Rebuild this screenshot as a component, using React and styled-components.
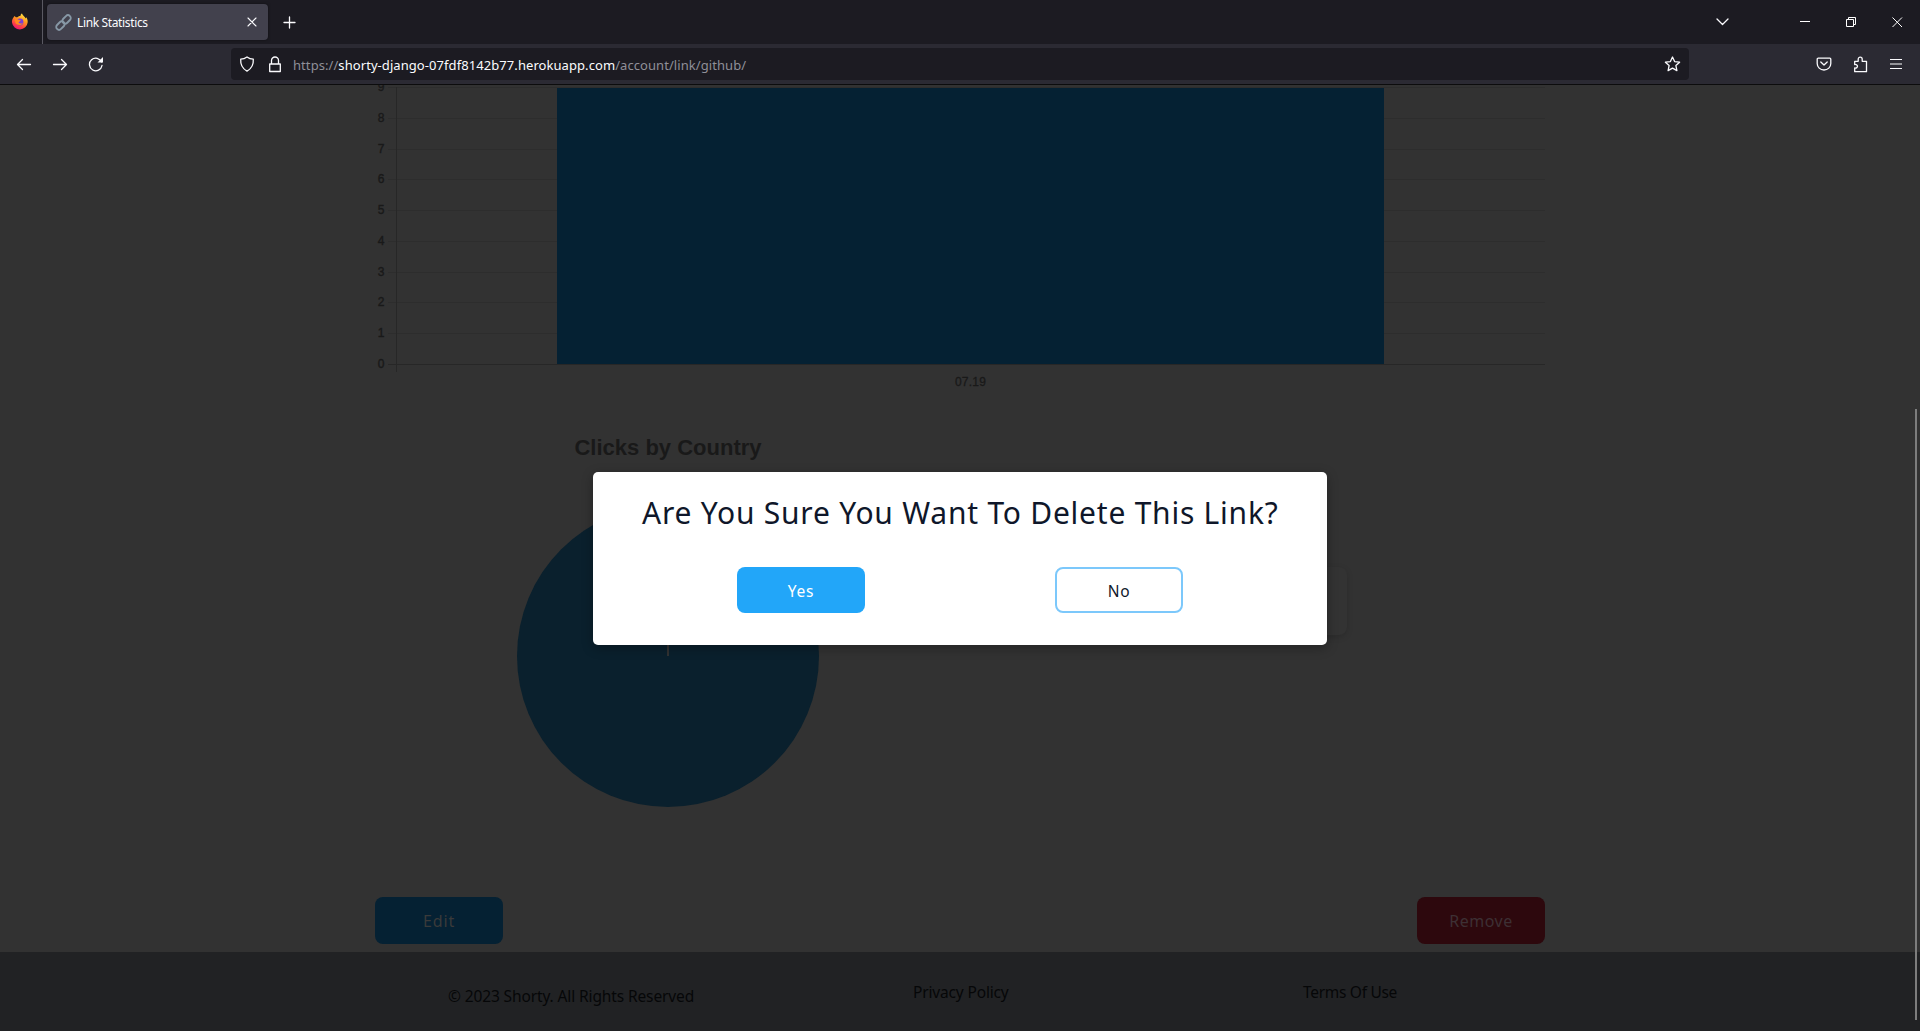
import React from "react";
import styled, { createGlobalStyle } from "styled-components";

const Global = createGlobalStyle`
  *{box-sizing:border-box}
  html,body{margin:0;background:#323232}
  body{font-family:"Noto Sans","Open Sans",sans-serif;overflow:hidden}
`;
const Window = styled.div`
  width:1920px;height:1031px;display:flex;flex-direction:column;overflow:hidden;
`;
const TabBar = styled.div`
  height:44px;flex:none;background:#1c1b22;display:flex;align-items:stretch;
`;
const Pinned = styled.div`
  width:43px;border-right:1px solid #5a5962;display:flex;align-items:center;padding-left:11px;
`;
const Tab = styled.div`
  width:221px;margin:4px 0 4px 4px;border-radius:4px;background:#42414d;display:flex;align-items:center;
  padding:0 11px 0 8px;box-shadow:0 0 3px rgba(0,0,0,.5);
`;
const TabTitle = styled.span`
  flex:1;margin-left:5px;padding-top:2px;color:#fbfbfe;font-size:12px;letter-spacing:${p => p.$ls}px;line-height:20px;white-space:nowrap;
`;
const Glyph = styled.svg`
  display:block;flex:none;margin-left:${p => p.$ml || 0}px;
`;
const WindowButtons = styled.div`
  margin-left:auto;display:flex;align-items:center;padding-right:17px;
`;
const Toolbar = styled.div`
  height:41px;flex:none;background:#2b2a33;border-bottom:1px solid #0c0c0d;display:flex;align-items:center;
`;
const NavButtons = styled.div`
  width:231px;display:flex;align-items:center;padding-left:16px;
`;
const UrlBar = styled.div`
  width:1458px;height:32px;border-radius:4px;background:#1c1b22;display:flex;align-items:center;padding:0 8px 0 8px;
`;
const Url = styled.div`
  flex:1;margin-left:11px;padding-top:2px;font-size:13px;line-height:20px;color:#8f8f98;white-space:nowrap;letter-spacing:${p => p.$ls}px;
  b{font-weight:400;color:#fbfbfe}
`;
const Extras = styled.div`
  margin-left:auto;display:flex;align-items:center;padding-right:18px;
`;
const Page = styled.main`
  flex:1;position:relative;background:#323232;overflow:hidden;display:flex;flex-direction:column;
`;
const Content = styled.div`
  width:1170px;height:867px;margin:0 auto;display:flex;flex-direction:column;
`;
const Chart = styled.svg`
  display:block;flex:none;font-family:"Liberation Sans",Arial,sans-serif;
`;
const PieRow = styled.section`
  display:flex;align-items:flex-start;height:430px;margin-top:26px;padding-left:142px;
`;
const PieBlock = styled.div`
  width:302px;display:flex;flex-direction:column;align-items:center;
`;
const PieTitle = styled.h2`
  margin:8px 0 43px;height:28px;color:#191919;white-space:nowrap;
  font:bold 22px/28px "Liberation Sans",Arial,sans-serif;
`;
const LegendCard = styled.div`
  width:300px;height:68px;margin:141px 0 0 228px;border-radius:8px;background:#333;box-shadow:0 2px 6px rgba(0,0,0,.15);
`;
const Actions = styled.div`
  display:flex;justify-content:space-between;margin-top:auto;padding-bottom:8px;
`;
const Button = styled.button`
  width:128px;height:${p => p.$h || 46}px;padding:${p => p.$pt || 0}px 0 0;border-radius:8px;border:${p => p.$border || "0"};
  background:${p => p.$bg};color:${p => p.$fg};font:400 ${p => p.$size || 16}px/22px "Noto Sans","Open Sans",sans-serif;
  letter-spacing:${p => p.$ls}px;text-align:center;
`;
const Footer = styled.footer`
  flex:1;background:#212224;display:flex;align-items:flex-start;
`;
const FooterText = styled.span`
  font-size:15.5px;line-height:22px;color:#060708;white-space:nowrap;
  margin-left:${p => p.$ml}px;margin-top:${p => p.$mt}px;width:${p => p.$w}px;letter-spacing:${p => p.$ls}px;
`;
const Overlay = styled.div`
  position:absolute;inset:0;display:flex;justify-content:center;align-items:flex-start;padding-top:387px;
`;
const Dialog = styled.div`
  width:734px;height:173px;border-radius:5px;background:#fff;box-shadow:0 3px 12px rgba(0,0,0,.3);
  display:flex;flex-direction:column;
`;
const DialogTitle = styled.h1`
  margin:19px 0 0;padding-left:49px;font-size:30px;line-height:44px;font-weight:400;color:#0f172a;white-space:nowrap;
  letter-spacing:${p => p.$ls}px;
`;
const DialogActions = styled.div`
  display:flex;margin-top:32px;padding-left:144px;gap:190px;
`;
const ScrollThumb = styled.div`
  position:absolute;left:1915px;top:324px;width:2px;height:611px;background:#7d7d7d;
`;

const line = { fill: "none", stroke: "#fbfbfe", strokeWidth: 1.3, strokeLinecap: "round", strokeLinejoin: "round" };

const Firefox = () => (
  <Glyph width="18" height="18" viewBox="0 0 18 18">
    <defs>
      <linearGradient id="fx" x1="0.8" y1="0" x2="0.3" y2="1">
        <stop offset="0" stopColor="#fff44f" /><stop offset=".4" stopColor="#ff9a1f" />
        <stop offset=".75" stopColor="#ff3f45" /><stop offset="1" stopColor="#e8127c" />
      </linearGradient>
    </defs>
    <path d="M2.6 4.2 3.5 2.9l1.4 1.3 1.4.1C7.600 3.200 8.800 2.700 9.500 3 9.400 1.500 10.200.8 11 .4c.4 1.900 3 2.900 3.800 5.100l.5-1.200c1.100 1.700 1.500 3.300 1.400 5A7.900 7.900 0 0 1 1 9.600C.8 7.600 1.400 5.600 2.600 4.200z" fill="url(#fx)" />
    <circle cx="9" cy="9" r="3.400" fill="#7a3fd8" />
    <path d="M3.500 6.500c1.500-.9 3.400-.6 4.500.6l1.800.2c-.4 1.200-1.700 1.300-2.300 2 .7 1.500 2.700 1.700 4.300.6-.8 2.500-5.400 3.200-7.300.2z" fill="#ff8a1f" />
  </Glyph>
);
const LinkIcon = () => (
  <Glyph width="17" height="17" viewBox="0 0 17 17">
    <g fill="none" stroke="#8798a6" strokeWidth="1.900">
      <rect x="-4.700" y="-2.800" width="9.400" height="5.600" rx="2.800" transform="translate(11.600 5.400) rotate(-45)" />
      <rect x="-4.700" y="-2.800" width="9.400" height="5.600" rx="2.800" transform="translate(5.400 11.600) rotate(-45)" />
    </g>
  </Glyph>
);

const ticks = [9, 8, 7, 6, 5, 4, 3, 2, 1, 0];
const tickY = v => 2.500 + Math.round((9 - v) * 30.75);

const BarChart = () => (
  <Chart width="1170" height="315">
    {ticks.map(v => (
      <g key={v}>
        <path d={`M13 ${tickY(v)}H1170`} stroke={v === 0 ? "#272727" : "#2d2d2d"} />
        <text x="9.500" y={tickY(v) + 3.500} textAnchor="end" fontSize="12" stroke="#191919" strokeWidth=".4" fill="#191919">{v}</text>
      </g>
    ))}
    <path d="M21.500 2V287" stroke="#272727" />
    <rect x="182" y="3" width="827" height="276" fill="#052133" />
    <text x="595.500" y="301" textAnchor="middle" fontSize="12" letterSpacing=".2" stroke="#191919" strokeWidth=".3" fill="#191919">07.19</text>
  </Chart>
);

export default function App() {
  return (
    <Window>
      <Global />
      <TabBar>
        <Pinned><Firefox /></Pinned>
        <Tab>
          <LinkIcon />
          <TabTitle $ls={-0.36}>Link Statistics</TabTitle>
          <Glyph width="10" height="10" viewBox="0 0 10 10"><path d="M1 1l8 8M9 1l-8 8" {...line} strokeWidth="1.100" /></Glyph>
        </Tab>
        <Glyph $ml={15} width="13" height="44" viewBox="0 0 13 44"><path d="M6.500 17v11M1 22.500h11" {...line} /></Glyph>
        <WindowButtons>
          <Glyph width="13" height="8" viewBox="0 0 13 8"><path d="M1 1l5.500 5.500L12 1" {...line} /></Glyph>
          <Glyph $ml={71} width="11" height="12" viewBox="0 -1 11 12"><path d="M0 4.500h10" stroke="#fff" /></Glyph>
          <Glyph $ml={35} width="11" height="12" viewBox="0 -1 11 12"><path d="M.5 2.500h7v7h-7zM2.500 2.500V.5h7v7H7.500" fill="none" stroke="#fff" /></Glyph>
          <Glyph $ml={35} width="11" height="12" viewBox="0 -1 11 12"><path d="M.5.5l9.500 9.500M10 .5L.5 10" stroke="#fff" /></Glyph>
        </WindowButtons>
      </TabBar>
      <Toolbar>
        <NavButtons>
          <Glyph width="16" height="14" viewBox="0 0 16 14"><path d="M14.500 7.500H1.500M6.500 2.500l-5 5 5 5" {...line} /></Glyph>
          <Glyph $ml={20} width="16" height="14" viewBox="0 0 16 14"><path d="M1.500 7.500h13M9.500 2.500l5 5-5 5" {...line} /></Glyph>
          <Glyph $ml={20} width="16" height="16" viewBox="0 0 16 16"><path d="M13.600 6A6.300 6.300 0 1 0 14 9.500" {...line} /><path d="M15 1v5.500H9.500z" fill="#fbfbfe" /></Glyph>
        </NavButtons>
        <UrlBar>
          <Glyph width="16" height="16" viewBox="0 0 16 16"><path d="M8 .9c2 1.500 4 2.100 6.300 2.200C14.700 9 12.400 12.700 8 15.100 3.600 12.700 1.300 9 1.700 3.100 4 3 6 2.400 8 .9z" {...line} /></Glyph>
          <Glyph $ml={13} width="14" height="17" viewBox="0 0 14 17"><path d="M1.700 8h10.600v7.500H1.700zM3.500 8V4.500a3.500 3.500 0 0 1 7 0V8" {...line} /></Glyph>
          <Url $ls={0.07}>https://<b>shorty-django-07fdf8142b77.herokuapp.com</b>/account/link/github/</Url>
          <Glyph width="17" height="16" viewBox="0 0 17 16"><path d="M8.500 1l2.100 4.600 5 .6-3.700 3.400 1 5-4.400-2.500-4.400 2.500 1-5L1.400 6.200l5-.6z" {...line} /></Glyph>
        </UrlBar>
        <Extras>
          <Glyph width="16" height="14" viewBox="0 0 16 14"><path d="M2.200 1.200h11.600c.6 0 1 .4 1 1v4.300c0 3.700-3 6.500-6.800 6.500S1.200 10.200 1.200 6.500V2.200c0-.6.4-1 1-1zM4.800 5L8 8l3.200-3" {...line} /></Glyph>
          <Glyph $ml={21} width="15" height="17" viewBox="0 0 15 17"><path d="M1.700 15.700V12c3.700.6 3.700-4 0-3.500V5.300h3.500V3.200c0-2.800 4-2.800 4 0v2.100h4.300v10.400z" {...line} /></Glyph>
          <Glyph $ml={21} width="13" height="12" viewBox="0 0 13 12"><path d="M1 1.500h12M1 6h12M1 10.500h12" stroke="#fbfbfe" strokeWidth="1.100" /></Glyph>
        </Extras>
      </Toolbar>
      <Page>
        <Content>
          <BarChart />
          <PieRow>
            <PieBlock>
              <PieTitle>Clicks by Country</PieTitle>
              <Glyph width="302" height="302"><circle cx="151" cy="151" r="151" fill="#0a202d" /><path d="M151 0v151" stroke="#323232" strokeWidth="2" /></Glyph>
            </PieBlock>
            <LegendCard />
          </PieRow>
          <Actions>
            <Button $h={47} $bg="#052133" $fg="#3a3a3a" $ls={0.85}>Edit</Button>
            <Button $h={47} $bg="#2d080d" $fg="#3d3034" $ls={0.5}>Remove</Button>
          </Actions>
        </Content>
        <Footer>
          <FooterText $ml={448} $mt={33} $w={465} $ls={-0.12}>© 2023 Shorty. All Rights Reserved</FooterText>
          <FooterText $mt={29} $w={390} $ls={-0.16}>Privacy Policy</FooterText>
          <FooterText $mt={29} $w={100} $ls={-0.3}>Terms Of Use</FooterText>
        </Footer>
        <Overlay>
          <Dialog>
            <DialogTitle $ls={0.77}>Are You Sure You Want To Delete This Link?</DialogTitle>
            <DialogActions>
              <Button $pt={2} $size={15.500} $bg="#22a6f9" $fg="#fff" $ls={0.7}>Yes</Button>
              <Button $pt={2} $size={15.500} $bg="#fff" $border="2px solid #7cc8fb" $fg="#0f172a" $ls={0.7}>No</Button>
            </DialogActions>
          </Dialog>
        </Overlay>
        <ScrollThumb />
      </Page>
    </Window>
  );
}
